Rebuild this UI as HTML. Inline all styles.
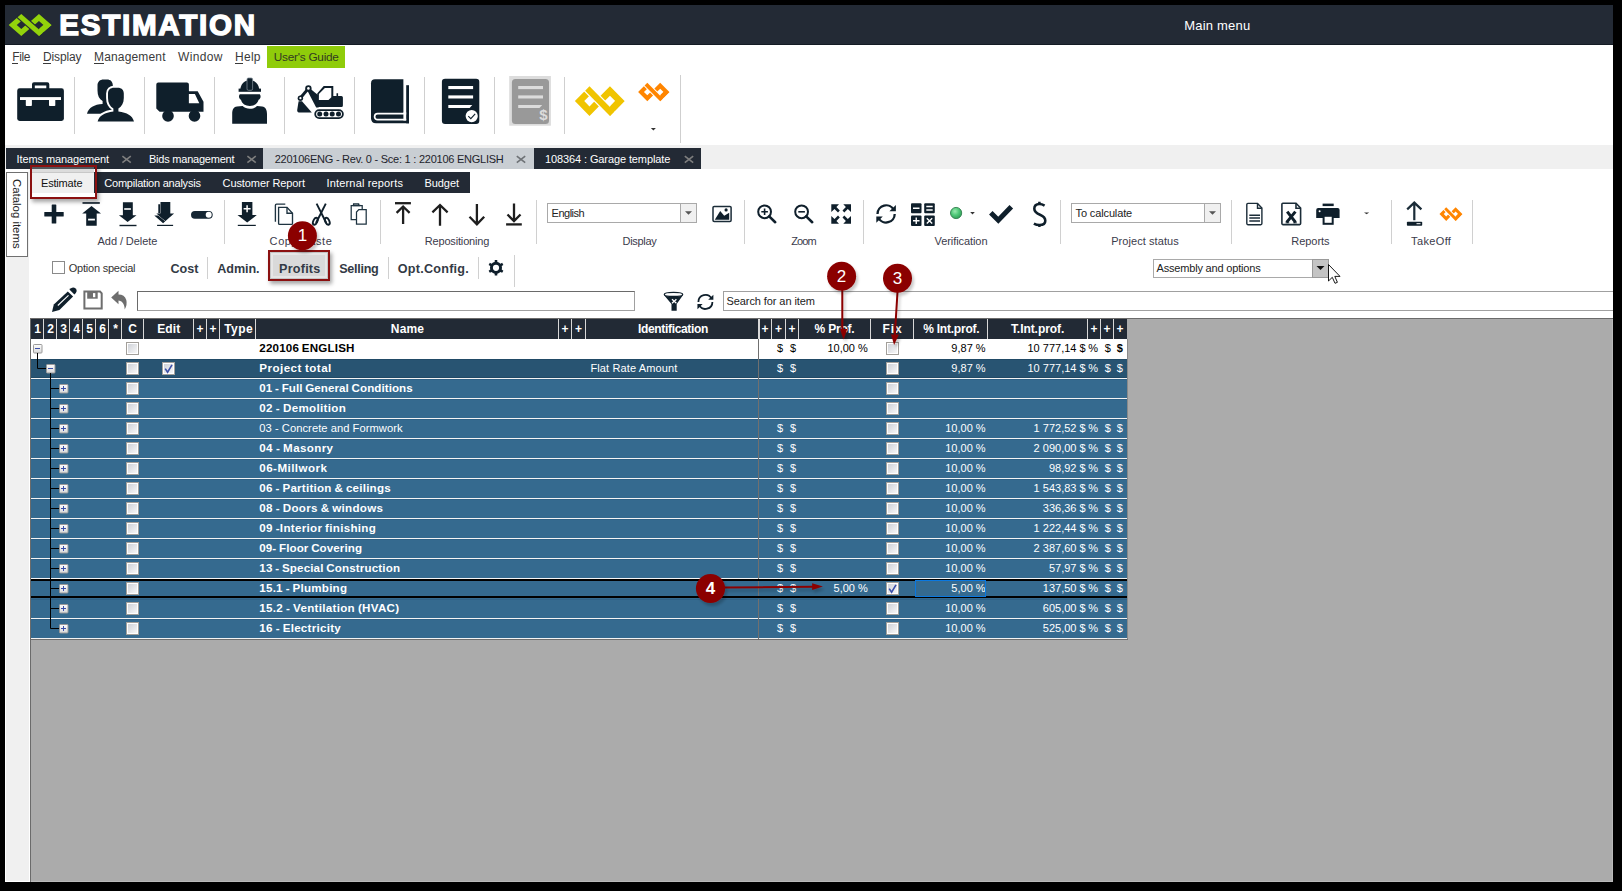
<!DOCTYPE html>
<html><head><meta charset="utf-8">
<style>
*{margin:0;padding:0;box-sizing:border-box}
html,body{width:1622px;height:891px;overflow:hidden;background:#000}
body{font-family:"Liberation Sans",sans-serif;position:relative}
.a{position:absolute}
.t{position:absolute;white-space:nowrap}
svg{overflow:visible}
</style></head><body>
<div class="a" style="left:5px;top:5px;width:1608px;height:877px;background:#fff;"></div>
<div class="a" style="left:5px;top:5px;width:1608px;height:39px;background:#232a35;"></div>
<div class="a" style="left:5px;top:44px;width:1608px;height:1px;background:#141b24;"></div>
<svg class="a" style="left:0px;top:0px" width="1" height="1" viewBox="0 0 1 1"><g transform="translate(21.3,25.0) scale(1,1) translate(-21.3,-25)"><path fill="#93d30b" fill-rule="evenodd" d="M8.70 25.00L21.30 13.95L33.90 25.00L21.30 36.05ZM16.75 25.00L21.30 28.95L25.85 25.00L21.30 21.05ZM26.35 25.00L38.95 13.95L51.55 25.00L38.95 36.05ZM34.40 25.00L38.95 28.95L43.50 25.00L38.95 21.05Z"/><path fill="#93d30b" stroke="#232a35" stroke-width="2.2" paint-order="stroke" d="M21.3 13.95L42.73 32.73L38.95 36.05L17.525 17.26Z"/><path fill="#93d30b" d="M38.95 28.95L43.5 25L51.55 25L38.95 36.05Z"/></g></svg>
<div class="t" style="left:59.2px;top:10.04px;font-size:29.6px;line-height:29.6px;font-weight:700;color:#fff;-webkit-text-stroke:1.4px #fff;letter-spacing:1.745px">ESTIMATION</div>
<div class="t" style="left:1184.3px;top:18.95px;font-size:13px;line-height:13px;font-weight:400;color:#fff;letter-spacing:0.198px">Main menu</div>
<div class="t" style="left:12.2px;top:51.40px;font-size:12px;line-height:12px;font-weight:400;color:#3a3a3a;letter-spacing:-0.348px">File</div>
<div class="t" style="left:43px;top:51.40px;font-size:12px;line-height:12px;font-weight:400;color:#3a3a3a;letter-spacing:-0.143px">Display</div>
<div class="t" style="left:94px;top:51.40px;font-size:12px;line-height:12px;font-weight:400;color:#3a3a3a;letter-spacing:0.161px">Management</div>
<div class="t" style="left:178px;top:51.40px;font-size:12px;line-height:12px;font-weight:400;color:#3a3a3a;letter-spacing:0.362px">Window</div>
<div class="t" style="left:235px;top:51.40px;font-size:12px;line-height:12px;font-weight:400;color:#3a3a3a;letter-spacing:0.271px">Help</div>
<div class="a" style="left:12px;top:63px;width:6px;height:1px;background:#3a3a3a;"></div>
<div class="a" style="left:43px;top:63px;width:8px;height:1px;background:#3a3a3a;"></div>
<div class="a" style="left:94px;top:63px;width:10px;height:1px;background:#3a3a3a;"></div>
<div class="a" style="left:235px;top:63px;width:8px;height:1px;background:#3a3a3a;"></div>
<div class="a" style="left:267px;top:46px;width:78px;height:22px;background:#8fcc0a;"></div>
<div class="t" style="left:273.8px;top:51.77px;font-size:11.8px;line-height:11.8px;font-weight:400;color:#333a22;letter-spacing:-0.248px">User's Guide</div>
<div class="a" style="left:74px;top:77px;width:1px;height:57px;background:#cfcfcf;"></div>
<div class="a" style="left:144px;top:77px;width:1px;height:57px;background:#cfcfcf;"></div>
<div class="a" style="left:214px;top:77px;width:1px;height:57px;background:#cfcfcf;"></div>
<div class="a" style="left:284px;top:77px;width:1px;height:57px;background:#cfcfcf;"></div>
<div class="a" style="left:354px;top:77px;width:1px;height:57px;background:#cfcfcf;"></div>
<div class="a" style="left:424px;top:77px;width:1px;height:57px;background:#cfcfcf;"></div>
<div class="a" style="left:494px;top:77px;width:1px;height:57px;background:#cfcfcf;"></div>
<div class="a" style="left:564px;top:77px;width:1px;height:57px;background:#cfcfcf;"></div>
<div class="a" style="left:680px;top:75px;width:1px;height:68px;background:#cfcfcf;"></div>
<svg class="a" style="left:0px;top:0px" width="1" height="1" viewBox="0 0 1 1"><g fill="#0f1f2b">
<path d="M34 82.3H47.3Q49.3 82.3 49.3 84.3V89H46.3V85.5H34.8V89H32V84.3Q32 82.3 34 82.3Z"/>
<rect x="17.2" y="88.3" width="46.7" height="32.6" rx="2.4"/></g>
<g fill="#fff"><rect x="20" y="97.1" width="41" height="2.9"/>
<rect x="25.8" y="99" width="6.1" height="7.1" rx="0.8"/><rect x="49" y="99" width="6.3" height="7.1" rx="0.8"/></g><g fill="#0f1f2b">
<path d="M102.6 101C99.2 99 97.5 95.5 97.5 90.5L97.5 85.5C97.5 81.6 100 79.5 103.5 79.5L107 79.5C110.5 79.5 112.8 81.6 112.8 85.5L112.8 90.5C112.8 95.5 110.8 99 107.6 101L107.6 104C112 104.5 116 107 118 113.7L87 113.7C88.6 107.5 94.2 104.5 102.6 104Z"/>
<path stroke="#fff" stroke-width="3.8" paint-order="stroke" d="M113.4 108.4C110 106.5 108 103 108 98L108 93.5C108 89.8 110.5 87.7 114 87.7L117.8 87.7C121.3 87.7 123.8 89.8 123.8 93.5L123.8 98C123.8 103 121.8 106.5 118.4 108.4L118.4 111.5C127 112.5 132.5 115.5 134 121.6L97.6 121.6C99.2 115.5 104.8 112.5 113.4 111.5Z"/></g><g fill="#0f1f2b">
<path d="M158.3 82.4H186.9Q188.9 82.4 188.9 84.4V91.2H197.7L203.5 101.7V111.7H159.6L156.3 108.5V84.4Q156.3 82.4 158.3 82.4Z"/>
<circle cx="168" cy="115.9" r="5.8"/><circle cx="194.5" cy="115.9" r="5.8"/></g>
<path fill="#fff" d="M188.9 93.9H194.9L199.3 103.3H188.9Z"/><g fill="#0f1f2b">
<rect x="238.6" y="88.6" width="22.4" height="3.2"/>
<path d="M240.4 89C241 83.5 245 80.3 249.8 80.3C254.6 80.3 258.6 83.5 259.2 89Z"/>
<rect x="247" y="78" width="5.6" height="12.3" rx="1.4" stroke="#7d8a94" stroke-width="0.8"/>
<path d="M239.8 94.2H259.8C261 95.5 261 98.5 258.6 99.8C257.6 104 254 106 249.8 106C245.6 106 242 104 241 99.8C238.6 98.5 238.6 95.5 239.8 94.2Z"/>
<path d="M232.2 123.7V114C232.2 109 234 107 237 106.6L242.6 106.1C244.6 108.1 247 108.8 249.8 108.8C252.6 108.8 255 108.1 257 106.1L262.2 106.6C265.5 107 267 110 267 114V123.7Z"/></g><g fill="#0f1f2b">
<path d="M317.2 93.6L323.7 85.9H333.3V96H336.5V93.2H338.1V96H341.4Q342.9 96 342.9 97.5V105.4Q342.9 106.9 341.4 106.9H318Z"/>
<path d="M307.3 90.6L310.9 89.2L318.6 95.5L318.6 107.4L316.2 107.4Z"/><path d="M308.4 88.4L300.4 98" fill="none" stroke="#0f1f2b" stroke-width="3" stroke-linejoin="round"/>
<circle cx="308.4" cy="88.4" r="3.2"/><circle cx="300.4" cy="98.2" r="2.7"/>
<path d="M298.6 101.2H302L311.8 112.6H300Q297 112.6 297.2 110Z"/>
<rect x="315.2" y="110.1" width="27.7" height="8" rx="4" fill="none" stroke="#0f1f2b" stroke-width="1.8"/>
<circle cx="319.7" cy="114.1" r="2.5"/><circle cx="326" cy="114.1" r="2.5"/><circle cx="332.2" cy="114.1" r="2.5"/><circle cx="338.5" cy="114.1" r="2.5"/></g>
<g fill="#fff"><path d="M318.9 94L324.9 88H331.3V97.2L328.5 100H318.9Z"/>
<circle cx="308.4" cy="88.4" r="1.3"/><circle cx="300.4" cy="98.2" r="1.1"/></g><g fill="#0f1f2b">
<path d="M375 79.2H403.4V113H371V83.2Q371 79.2 375 79.2Z"/>
<rect x="406.2" y="85.2" width="2.8" height="38.1"/>
<path d="M371 112.5H409V123.3H376Q371 123.3 371 118.3Z"/></g>
<path d="M406.2 113.7H377.6A3 3 0 0 0 377.6 119.7H406.2" stroke="#fff" stroke-width="1.7" fill="none"/><rect x="403.4" y="112" width="2.8" height="8.5" fill="#fff"/><rect x="441.9" y="78.8" width="37.4" height="45.1" rx="3.2" fill="#0f1f2b"/>
<g fill="#fff"><rect x="448.3" y="86" width="24.8" height="3.1"/><rect x="448.3" y="95.4" width="24.8" height="3.1"/>
<path d="M448.3 104.9H472.3L469.6 107.9H448.3Z"/><circle cx="471.7" cy="116.1" r="6.1"/></g>
<path d="M468.3 116.2L470.8 118.6L475.2 113.8" stroke="#0f1f2b" stroke-width="1.1" fill="none"/><rect x="509.2" y="76" width="41.7" height="49.7" fill="#dcdcdc"/>
<rect x="511.9" y="79" width="37.1" height="44.9" rx="3.5" fill="#999"/>
<g fill="#dcdcdc"><rect x="518.2" y="86" width="24.8" height="3.1"/><rect x="518.2" y="95.4" width="24.8" height="3.1"/>
<path d="M518.2 104.9H542.2L539.5 107.9H518.2Z"/></g><g transform="translate(589.5,101.1) scale(1.159,1.353) translate(-21.3,-25)"><path fill="#f0c400" fill-rule="evenodd" d="M8.70 25.00L21.30 13.95L33.90 25.00L21.30 36.05ZM16.75 25.00L21.30 28.95L25.85 25.00L21.30 21.05ZM26.35 25.00L38.95 13.95L51.55 25.00L38.95 36.05ZM34.40 25.00L38.95 28.95L43.50 25.00L38.95 21.05Z"/><path fill="#f0c400" stroke="#fff" stroke-width="2.0" paint-order="stroke" d="M21.3 13.95L42.73 32.73L38.95 36.05L17.525 17.26Z"/><path fill="#f0c400" d="M38.95 28.95L43.5 25L51.55 25L38.95 36.05Z"/></g><g transform="translate(647.3,92.0) scale(0.73,0.846) translate(-21.3,-25)"><path fill="#ff8500" fill-rule="evenodd" d="M8.70 25.00L21.30 13.95L33.90 25.00L21.30 36.05ZM16.75 25.00L21.30 28.95L25.85 25.00L21.30 21.05ZM26.35 25.00L38.95 13.95L51.55 25.00L38.95 36.05ZM34.40 25.00L38.95 28.95L43.50 25.00L38.95 21.05Z"/><path fill="#ff8500" stroke="#fff" stroke-width="2.4" paint-order="stroke" d="M21.3 13.95L42.73 32.73L38.95 36.05L17.525 17.26Z"/><path fill="#ff8500" d="M38.95 28.95L43.5 25L51.55 25L38.95 36.05Z"/></g><path d="M650.9 127.9H655.9L653.4 130.6Z" fill="#333"/></svg>
<div class="t" style="left:539.2px;top:107.45px;font-size:15px;line-height:15px;font-weight:700;color:#dcdcdc;">$</div>
<div class="a" style="left:5px;top:145px;width:1608px;height:24px;background:#f0f0f0;"></div>
<div class="a" style="left:6px;top:148px;width:695px;height:21px;background:#232a35;"></div>
<div class="a" style="left:263px;top:148px;width:271px;height:21px;background:#c9ced3;"></div>
<div class="t" style="left:16.6px;top:153.65px;font-size:11px;line-height:11px;font-weight:400;color:#fff;letter-spacing:-0.110px">Items management</div>
<div class="t" style="left:149px;top:153.65px;font-size:11px;line-height:11px;font-weight:400;color:#fff;letter-spacing:-0.227px">Bids management</div>
<div class="t" style="left:274.7px;top:153.65px;font-size:11px;line-height:11px;font-weight:400;color:#1d232b;letter-spacing:-0.241px">220106ENG - Rev. 0 - Sce: 1 : 220106 ENGLISH</div>
<div class="t" style="left:545px;top:153.65px;font-size:11px;line-height:11px;font-weight:400;color:#fff;letter-spacing:-0.109px">108364 : Garage template</div>
<svg class="a" style="left:0px;top:0px" width="1" height="1" viewBox="0 0 1 1"><path d="M122.4 156.1L130.8 162.7M130.8 156.1L122.4 162.7" stroke="#7e7e7e" stroke-width="1.6" fill="none"/><path d="M247.4 156.1L255.8 162.7M255.8 156.1L247.4 162.7" stroke="#7e7e7e" stroke-width="1.6" fill="none"/><path d="M516.8 156.1L525.1999999999999 162.7M525.1999999999999 156.1L516.8 162.7" stroke="#6e7276" stroke-width="1.6" fill="none"/><path d="M684.8 156.1L693.1999999999999 162.7M693.1999999999999 156.1L684.8 162.7" stroke="#7e7e7e" stroke-width="1.6" fill="none"/></svg>
<div class="a" style="left:5px;top:172px;width:1px;height:710px;background:#fff;"></div>
<div class="a" style="left:6px;top:172px;width:23px;height:709px;background:#f0f0f0;"></div>
<div class="a" style="left:94px;top:172px;width:376px;height:21px;background:#232a35;"></div>
<div class="a" style="left:31px;top:172px;width:63px;height:21px;background:#f0f0f0;"></div>
<div class="t" style="left:41px;top:177.65px;font-size:11px;line-height:11px;font-weight:400;color:#111;letter-spacing:-0.185px">Estimate</div>
<div class="t" style="left:104.3px;top:177.65px;font-size:11px;line-height:11px;font-weight:400;color:#fff;letter-spacing:-0.226px">Compilation analysis</div>
<div class="t" style="left:222.6px;top:177.65px;font-size:11px;line-height:11px;font-weight:400;color:#fff;letter-spacing:-0.098px">Customer Report</div>
<div class="t" style="left:326.6px;top:177.65px;font-size:11px;line-height:11px;font-weight:400;color:#fff;letter-spacing:0.154px">Internal reports</div>
<div class="t" style="left:424.5px;top:177.65px;font-size:11px;line-height:11px;font-weight:400;color:#fff;letter-spacing:-0.075px">Budget</div>
<div class="a" style="left:6px;top:172px;width:22px;height:85px;background:#fff;border:1px solid #707070"></div>
<div class="t" style="left:10px;top:178.5px;font-size:11.4px;line-height:13px;color:#222;writing-mode:vertical-rl">Catalog items</div>
<div class="a" style="left:31px;top:167px;width:63px;height:2px;background:#50565c;"></div>
<div class="a" style="left:31px;top:169px;width:63px;height:3px;background:#dcdcdc;"></div>
<div class="a" style="left:31px;top:172px;width:63px;height:1px;background:#c8c8c8;"></div>
<div class="a" style="left:29.5px;top:165px;width:67.5px;height:33.7px;border:2.6px solid #8b1010;box-shadow:2px 3px 4px rgba(0,0,0,.35)"></div>
<div class="a" style="left:224px;top:200px;width:1px;height:44px;background:#d0d0d0;"></div>
<div class="a" style="left:380px;top:200px;width:1px;height:44px;background:#d0d0d0;"></div>
<div class="a" style="left:536px;top:200px;width:1px;height:44px;background:#d0d0d0;"></div>
<div class="a" style="left:744px;top:200px;width:1px;height:44px;background:#d0d0d0;"></div>
<div class="a" style="left:863px;top:200px;width:1px;height:44px;background:#d0d0d0;"></div>
<div class="a" style="left:1060px;top:200px;width:1px;height:44px;background:#d0d0d0;"></div>
<div class="a" style="left:1231px;top:200px;width:1px;height:44px;background:#d0d0d0;"></div>
<div class="a" style="left:1391px;top:200px;width:1px;height:44px;background:#d0d0d0;"></div>
<div class="a" style="left:1472px;top:200px;width:1px;height:44px;background:#d0d0d0;"></div>
<div class="t" style="left:67.4px;width:120px;text-align:center;top:235.65px;font-size:11px;line-height:11px;font-weight:400;color:#3b3b4b;letter-spacing:-0.077px">Add / Delete</div>
<div class="t" style="left:241.0px;width:120px;text-align:center;top:235.65px;font-size:11px;line-height:11px;font-weight:400;color:#3b3b4b;letter-spacing:0.592px">Copy/Paste</div>
<div class="t" style="left:397.0px;width:120px;text-align:center;top:235.65px;font-size:11px;line-height:11px;font-weight:400;color:#3b3b4b;letter-spacing:-0.163px">Repositioning</div>
<div class="t" style="left:579.5px;width:120px;text-align:center;top:235.65px;font-size:11px;line-height:11px;font-weight:400;color:#3b3b4b;letter-spacing:-0.313px">Display</div>
<div class="t" style="left:743.5px;width:120px;text-align:center;top:235.65px;font-size:11px;line-height:11px;font-weight:400;color:#3b3b4b;letter-spacing:-0.875px">Zoom</div>
<div class="t" style="left:901.0px;width:120px;text-align:center;top:235.65px;font-size:11px;line-height:11px;font-weight:400;color:#3b3b4b;letter-spacing:-0.074px">Verification</div>
<div class="t" style="left:1085.0px;width:120px;text-align:center;top:235.65px;font-size:11px;line-height:11px;font-weight:400;color:#3b3b4b;letter-spacing:0.074px">Project status</div>
<div class="t" style="left:1250.4px;width:120px;text-align:center;top:235.65px;font-size:11px;line-height:11px;font-weight:400;color:#3b3b4b;letter-spacing:-0.039px">Reports</div>
<div class="t" style="left:1371.2px;width:120px;text-align:center;top:235.65px;font-size:11px;line-height:11px;font-weight:400;color:#3b3b4b;letter-spacing:0.347px">TakeOff</div>
<svg class="a" style="left:0px;top:0px" width="1" height="1" viewBox="0 0 1 1"><g fill="#0f1f2b"><rect x="44.3" y="211.9" width="19.4" height="4.6" rx="0.6"/><rect x="51.7" y="204.5" width="4.6" height="19.1" rx="0.6"/></g><rect x="82.5" y="202" width="17.3" height="1.9" fill="#2a3640"/><path fill="#0f1f2b" d="M82.2 213.4L91.5 206L101 213.4H96.7V225.7H86.2V213.4Z"/><rect x="88.1" y="218.7" width="6.8" height="1.8" fill="#fff"/><path fill="#0f1f2b" d="M122.9 202.2H132.8V215.3H136.5L127.6 221.9L118.9 215.3H122.9Z"/><rect x="119.5" y="224.8" width="17" height="1.4" fill="#0f1f2b"/><rect x="124.2" y="208.2" width="6.7" height="1.6" fill="#fff"/><g fill="#0f1f2b" stroke="#fff" stroke-width="0.8" paint-order="stroke"><path d="M158.3 204.2H168V215.6H171.8L163.1 223.2L154.3 215.6H158.3Z"/><path d="M160.5 202H170.3V213.6H174.1L165.3 221.1L156.4 213.6H160.5Z"/></g><rect x="157.1" y="224.8" width="16" height="1.2" fill="#0f1f2b"/><rect x="191" y="210.9" width="21.7" height="7.8" rx="3.9" fill="#152633"/><circle cx="208.7" cy="214.8" r="3" fill="#fff"/><path fill="#0f1f2b" d="M241.9 202H252.4V215H256.8L247.2 222.6L237.5 215H241.9Z"/><rect x="237.8" y="224.8" width="18" height="1.2" fill="#0f1f2b"/><path d="M247.1 205.2V212.2M243.6 208.7H250.6" stroke="#fff" stroke-width="1.5"/><g fill="none" stroke="#1e3340" stroke-width="1.35"><path d="M275.4 221.8V205.2Q275.4 204.1 276.5 204.1H285.3"/><path d="M278.6 207.4H287L292.5 213.2V223.4Q292.5 224.4 291.5 224.4H279.6Q278.6 224.4 278.6 223.4Z"/><path d="M287 207.4V213.2H292.5"/></g><g fill="none" stroke="#0f1f2b" stroke-width="1.9"><path d="M316.6 203.6L326.3 223"/><path d="M325.8 203.6L316 223"/><ellipse cx="315.3" cy="221.2" rx="2" ry="3.7" transform="rotate(25 315.3 221.2)"/><ellipse cx="327.3" cy="221.2" rx="2" ry="3.7" transform="rotate(-25 327.3 221.2)"/></g><g fill="none" stroke="#1e3340" stroke-width="1.25"><path d="M356 219.6H351.2V205.6H362.2V209.2"/><path d="M353.6 205.2V203.8H358.6V205.2"/><path d="M358.8 209.6H366.2V224H356.5V212Z"/></g><rect x="352.8" y="204.6" width="7.4" height="1.6" fill="#1e3340"/><g fill="none" stroke="#1e1e1e" stroke-width="2.3"><path d="M395 203.2H410.9"/><path d="M403.1 206.2V223.9M396.6 212.8L403.1 206.5L409.6 212.8"/><path d="M440 205.5V225.7M432.4 212.3L440 205L447.6 212.3"/><path d="M476.9 204V224M469.5 216.8L476.9 224.3L484.2 216.8"/><path d="M514 203.4V221M507.5 214.5L514 221L520.5 214.5"/><path d="M506.1 224.4H521.8"/></g><rect x="713" y="206.4" width="18.1" height="15.1" rx="1.2" fill="none" stroke="#1b2c38" stroke-width="1.5"/><path d="M714.8 219.7L720.2 210.9L724.2 215.8L729.2 212.8V219.7Z" fill="#0f1f2b"/><circle cx="726.1" cy="209.9" r="1.6" fill="#0f1f2b"/><circle cx="764.6" cy="211.8" r="6.4" fill="none" stroke="#0f1f2b" stroke-width="2"/><path d="M769.2 216.4L775.2 222.2" stroke="#0f1f2b" stroke-width="2.6" stroke-linecap="round"/><path d="M761.3000000000001 211.8H767.9M764.6 208.5V215.1" stroke="#0f1f2b" stroke-width="1.6"/><circle cx="801.6" cy="211.8" r="6.4" fill="none" stroke="#0f1f2b" stroke-width="2"/><path d="M806.2 216.4L812.2 222.2" stroke="#0f1f2b" stroke-width="2.6" stroke-linecap="round"/><path d="M798.3000000000001 211.8H804.9" stroke="#0f1f2b" stroke-width="1.6"/><g fill="#0f1f2b"><path d="M831.3 204.2L839 204.2L836.4 207L839.8 210.6L838 212.5L834.5 209L831.3 211.9Z"/><path d="M851 204.2L843.3 204.2L845.9 207L842.5 210.6L844.3 212.5L847.8 209L851 211.9Z"/><path d="M831.3 223.8L839 223.8L836.4 221L839.8 217.4L838 215.5L834.5 219L831.3 216.1Z"/><path d="M851 223.8L843.3 223.8L845.9 221L842.5 217.4L844.3 215.5L847.8 219L851 216.1Z"/></g><path d="M877.50 213.90A8.6 8.6 0 0 1 893.69 209.86M894.70 213.90A8.6 8.6 0 0 1 878.51 217.94" fill="none" stroke="#0f1f2b" stroke-width="2.3"/><path fill="#0f1f2b" d="M895.90 211.20L889.40 211.20L895.90 205.00Z"/><path fill="#0f1f2b" d="M876.30 216.60L882.80 216.60L876.30 222.80Z"/><g fill="#0f1f2b"><rect x="911" y="203.3" width="10.5" height="9.9" rx="1"/><rect x="924.2" y="203.3" width="10.6" height="9.9" rx="1"/><rect x="911" y="215.6" width="10.5" height="10.3" rx="1"/><rect x="924.2" y="215.6" width="10.6" height="10.3" rx="1"/></g><g stroke="#fff" stroke-width="1.4"><path d="M913 208.2H919.5M926.3 206.5H932.7M926.3 210H932.7M913 220.7H919.5M916.25 217.5V224M926.8 218.2L932.2 223.4M932.2 218.2L926.8 223.4"/></g><defs><radialGradient id="gd" cx="0.4" cy="0.35" r="0.7"><stop offset="0" stop-color="#9be8b0"/><stop offset="0.5" stop-color="#4fc878"/><stop offset="1" stop-color="#2e9a55"/></radialGradient></defs><circle cx="956.1" cy="213" r="5.6" fill="url(#gd)" stroke="#2f7f4c" stroke-width="0.9"/><path d="M970.2 212.1H974.8L972.5 214.4Z" fill="#333"/><path d="M990.8 212.8L998.3 220.2L1011.3 206.8" fill="none" stroke="#0f1f2b" stroke-width="5"/><path d="M1044.6 205.6C1042.8 204.5 1041 204 1039.4 204C1036.2 204 1034.3 206 1034.3 208.8C1034.3 212.2 1037 213.5 1040 214.7C1043.2 216 1045.3 217.6 1045.3 220.7C1045.3 223.5 1043 225 1039.6 225C1037.3 225 1035.3 224.4 1033.9 223.6M1039.4 201.8V204.2M1039.4 224.8V227" fill="none" stroke="#0f1f2b" stroke-width="2.55"/><g fill="none" stroke="#1b2c38" stroke-width="1.4"><path d="M1246.8 204.5Q1246.8 203.4 1247.9 203.4H1257.5L1261.9 208V223.6Q1261.9 224.7 1260.8 224.7H1247.9Q1246.8 224.7 1246.8 223.6Z"/><path d="M1257.5 203.6V208.2H1261.8"/></g><path d="M1249.3 215.2H1260M1249.3 218.1H1260M1249.3 221H1260" stroke="#1b2c38" stroke-width="1.5"/><g fill="none" stroke="#1b2c38" stroke-width="1.6"><path d="M1281.9 204.2Q1281.9 203.2 1282.9 203.2H1296L1300.6 208V223.6Q1300.6 224.6 1299.6 224.6H1282.9Q1281.9 224.6 1281.9 223.6Z"/><path d="M1296 203.4V208.2H1300.5"/></g><path d="M1287.2 211.6L1295.6 222.4M1295.4 211.6L1286.6 222.4" stroke="#0f1f2b" stroke-width="3" fill="none"/><path d="M1285.6 222.8H1289.2M1293.3 222.8H1296.8" stroke="#0f1f2b" stroke-width="1"/><g fill="#0f1f2b"><rect x="1322.6" y="203.6" width="11.1" height="2.5"/><path d="M1318.2 208H1337.6Q1339.6 208 1339.6 210V218H1316.2V210Q1316.2 208 1318.2 208Z"/></g><rect x="1323.6" y="215.8" width="9.1" height="8" fill="#fff" stroke="#0f1f2b" stroke-width="2"/><circle cx="1319.6" cy="211.3" r="1" fill="#fff"/><path d="M1364 212.4H1369.2L1366.6 214.3Z" fill="#333"/><g fill="none" stroke="#1b2c38" stroke-width="2.2"><path d="M1414.3 203.5V220.2M1407.2 209.4L1414.3 202.6L1421.4 209.4"/></g><rect x="1406.9" y="221.7" width="15.3" height="4.1" rx="0.8" fill="#0f1f2b"/><rect x="1416.5" y="223.2" width="4" height="1" fill="#fff"/><g transform="translate(1446.2,214.05) scale(0.534,0.62) translate(-21.3,-25)"><path fill="#ff8500" fill-rule="evenodd" d="M8.70 25.00L21.30 13.95L33.90 25.00L21.30 36.05ZM16.75 25.00L21.30 28.95L25.85 25.00L21.30 21.05ZM26.35 25.00L38.95 13.95L51.55 25.00L38.95 36.05ZM34.40 25.00L38.95 28.95L43.50 25.00L38.95 21.05Z"/><path fill="#ff8500" stroke="#fff" stroke-width="3.4" paint-order="stroke" d="M21.3 13.95L42.73 32.73L38.95 36.05L17.525 17.26Z"/><path fill="#ff8500" d="M38.95 28.95L43.5 25L51.55 25L38.95 36.05Z"/></g></svg>
<div class="a" style="left:547px;top:203px;width:150px;height:20px;background:#fff;border:1px solid #a9a9a9"></div>
<div class="a" style="left:680px;top:203px;width:17px;height:20px;background:#f0f0f0;border:1px solid #a9a9a9"></div>
<svg class="a" style="left:0;top:0" width="1" height="1"><path d="M685.0 211.2H692.0L688.5 214.8Z" fill="#555"/></svg>
<div class="t" style="left:551.6px;top:207.65px;font-size:11px;line-height:11px;font-weight:400;color:#222;letter-spacing:-0.513px">English</div>
<div class="a" style="left:1071px;top:203px;width:150px;height:20px;background:#fff;border:1px solid #a9a9a9"></div>
<div class="a" style="left:1204px;top:203px;width:17px;height:20px;background:#f0f0f0;border:1px solid #a9a9a9"></div>
<svg class="a" style="left:0;top:0" width="1" height="1"><path d="M1209.0 211.2H1216.0L1212.5 214.8Z" fill="#555"/></svg>
<div class="t" style="left:1075.6px;top:207.65px;font-size:11px;line-height:11px;font-weight:400;color:#222;letter-spacing:-0.136px">To calculate</div>
<div class="a" style="left:52px;top:261px;width:13px;height:13px;background:#fff;border:1px solid #8a8a8a"></div>
<div class="t" style="left:68.8px;top:263.15px;font-size:11px;line-height:11px;font-weight:400;color:#333;letter-spacing:-0.232px">Option special</div>
<div class="t" style="left:170.5px;top:263.09px;font-size:12.6px;line-height:12.6px;font-weight:700;color:#333a45;letter-spacing:-0.033px">Cost</div>
<div class="a" style="left:207px;top:257px;width:1px;height:22px;background:#d0d0d0;"></div>
<div class="t" style="left:217.3px;top:263.09px;font-size:12.6px;line-height:12.6px;font-weight:700;color:#333a45;letter-spacing:-0.078px">Admin.</div>
<div class="a" style="left:270px;top:252px;width:58px;height:27px;background:#d9d9d9;border:1px solid #c4c4c4;box-shadow:inset 0 0 0 2px #e6e6e6"></div>
<div class="t" style="left:279px;top:263.09px;font-size:12.6px;line-height:12.6px;font-weight:700;color:#333a45;letter-spacing:0.235px">Profits</div>
<div class="t" style="left:339.2px;top:263.09px;font-size:12.6px;line-height:12.6px;font-weight:700;color:#333a45;letter-spacing:-0.283px">Selling</div>
<div class="a" style="left:388px;top:257px;width:1px;height:22px;background:#d0d0d0;"></div>
<div class="t" style="left:397.8px;top:263.09px;font-size:12.6px;line-height:12.6px;font-weight:700;color:#333a45;letter-spacing:0.245px">Opt.Config.</div>
<div class="a" style="left:478px;top:257px;width:1px;height:22px;background:#d0d0d0;"></div>
<div class="a" style="left:514px;top:255px;width:1px;height:32px;background:#d0d0d0;"></div>
<div class="a" style="left:1153px;top:258.5px;width:176px;height:19px;background:#fff;border:1px solid #a9a9a9"></div>
<div class="a" style="left:1312px;top:258.5px;width:17px;height:19px;background:#c4c4c4;border:1px solid #9a9a9a"></div>
<div class="t" style="left:1156.5px;top:262.65px;font-size:11px;line-height:11px;font-weight:400;color:#222;letter-spacing:-0.180px">Assembly and options</div>
<svg class="a" style="left:0px;top:0px" width="1" height="1" viewBox="0 0 1 1"><path fill-rule="evenodd" fill="#0f1f2b" d="M499.00 262.60L497.35 261.95L497.24 260.00L494.76 260.00L494.65 261.95L493.00 262.60L493.00 262.60L491.61 263.71L489.86 262.83L488.62 264.97L490.26 266.05L490.00 267.80L490.00 267.80L490.26 269.55L488.62 270.63L489.86 272.77L491.61 271.89L493.00 273.00L493.00 273.00L494.65 273.65L494.76 275.60L497.24 275.60L497.35 273.65L499.00 273.00L499.00 273.00L500.39 271.89L502.14 272.77L503.38 270.63L501.74 269.55L502.00 267.80L502.00 267.80L501.74 266.05L503.38 264.97L502.14 262.83L500.39 263.71L499.00 262.60ZM499.1 267.8A3.1 3.1 0 1 0 492.9 267.8A3.1 3.1 0 1 0 499.1 267.8Z"/><path fill="#0f1f2b" d="M52 311.9L53.8 304.6L67.8 291.4L73.1 296.6L59.4 310.1Z"/><path fill="#0f1f2b" d="M69.4 289.6L71 288.2Q73.5 286.5 75.6 288.6Q77.6 290.7 75.8 293L74.4 294.6Z"/><path d="M57.8 305.5L68.5 295.3" stroke="#fff" stroke-width="1.1"/><path fill="none" stroke="#6e6e6e" stroke-width="2" d="M84.4 291.5H100L101.7 293.3V308.5H84.4Z"/><rect x="87.2" y="292" width="10.5" height="6.7" fill="#6e6e6e"/><rect x="93" y="293.1" width="2.3" height="4.1" fill="#fff"/><path fill="#6e6e6e" d="M111.2 297.5L118.5 290.8V294.6Q124.5 294.6 126.3 300Q127.5 304.5 124.7 309.5Q124.6 304.5 121.8 301.8Q120.5 300.5 118.5 300.4V304.3Z"/><ellipse cx="673.5" cy="294.4" rx="9.2" ry="2.1" fill="none" stroke="#0f1f2b" stroke-width="1.3"/><path fill="#0f1f2b" d="M664.1 295.2Q673.5 299 682.9 295.2L676.7 304V310.7H671.5V304Z"/><path d="M672 299.3L676.4 303.3M676.4 299.3L672 303.3" stroke="#fff" stroke-width="1.3"/><path d="M698.40 301.90A7.0 7.0 0 0 1 711.58 298.61M712.40 301.90A7.0 7.0 0 0 1 699.22 305.19" fill="none" stroke="#0f1f2b" stroke-width="1.8"/><path fill="#0f1f2b" d="M713.36 299.74L708.16 299.74L713.36 294.66Z"/><path fill="#0f1f2b" d="M697.44 304.06L702.64 304.06L697.44 309.14Z"/><path d="M1316.5 266H1324.5L1320.5 270Z" fill="#111"/><path d="M1328.5 264.5V281L1332.3 277.3L1335 283.3L1337.4 282.3L1334.8 276.4H1340Z" fill="#fff" stroke="#000" stroke-width="0.9" stroke-linejoin="round"/></svg>
<div class="a" style="left:137px;top:291px;width:498px;height:20px;background:#fff;border:1px solid #a0a0a0;border-top-color:#6a6a6a;border-left-color:#6a6a6a"></div>
<div class="a" style="left:723px;top:291px;width:895px;height:20px;background:#fff;border:1px solid #a0a0a0"></div>
<div class="a" style="left:1613px;top:286px;width:9px;height:30px;background:#000;"></div>
<div class="t" style="left:726.5px;top:295.65px;font-size:11px;line-height:11px;font-weight:400;color:#222;letter-spacing:-0.087px">Search for an item</div>
<div class="a" style="left:30px;top:318px;width:1583px;height:564px;background:#ababab;"></div>
<div class="a" style="left:30px;top:318px;width:1583px;height:1px;background:#6b6b6b;"></div>
<div class="a" style="left:30px;top:318px;width:1px;height:564px;background:#6b6b6b;"></div>
<div class="a" style="left:5px;top:881px;width:25px;height:1px;background:#fff;"></div>
<div class="a" style="left:31px;top:881px;width:1582px;height:1px;background:#bababa;"></div>
<div class="a" style="left:1612px;top:319px;width:1px;height:563px;background:#bababa;"></div>
<div class="a" style="left:1127px;top:339px;width:1px;height:300px;background:#8a8a8a;"></div>
<div class="a" style="left:31px;top:319px;width:1096px;height:20px;background:#222a35;"></div>
<div class="a" style="left:43px;top:319px;width:1.2px;height:20px;background:#d8d8d8;"></div>
<div class="a" style="left:56px;top:319px;width:1.2px;height:20px;background:#d8d8d8;"></div>
<div class="a" style="left:69px;top:319px;width:1.2px;height:20px;background:#d8d8d8;"></div>
<div class="a" style="left:82px;top:319px;width:1.2px;height:20px;background:#d8d8d8;"></div>
<div class="a" style="left:95px;top:319px;width:1.2px;height:20px;background:#d8d8d8;"></div>
<div class="a" style="left:108px;top:319px;width:1.2px;height:20px;background:#d8d8d8;"></div>
<div class="a" style="left:121px;top:319px;width:1.2px;height:20px;background:#d8d8d8;"></div>
<div class="a" style="left:143px;top:319px;width:1.2px;height:20px;background:#d8d8d8;"></div>
<div class="a" style="left:193px;top:319px;width:1.2px;height:20px;background:#d8d8d8;"></div>
<div class="a" style="left:206px;top:319px;width:1.2px;height:20px;background:#d8d8d8;"></div>
<div class="a" style="left:219px;top:319px;width:1.2px;height:20px;background:#d8d8d8;"></div>
<div class="a" style="left:255px;top:319px;width:1.2px;height:20px;background:#d8d8d8;"></div>
<div class="a" style="left:558px;top:319px;width:1.2px;height:20px;background:#d8d8d8;"></div>
<div class="a" style="left:571px;top:319px;width:1.2px;height:20px;background:#d8d8d8;"></div>
<div class="a" style="left:585px;top:319px;width:1.2px;height:20px;background:#d8d8d8;"></div>
<div class="a" style="left:758px;top:319px;width:1.5px;height:20px;background:#d8d8d8;"></div>
<div class="a" style="left:771px;top:319px;width:1.2px;height:20px;background:#d8d8d8;"></div>
<div class="a" style="left:785px;top:319px;width:1.2px;height:20px;background:#d8d8d8;"></div>
<div class="a" style="left:798px;top:319px;width:1.2px;height:20px;background:#d8d8d8;"></div>
<div class="a" style="left:870px;top:319px;width:1.2px;height:20px;background:#d8d8d8;"></div>
<div class="a" style="left:913px;top:319px;width:1.2px;height:20px;background:#d8d8d8;"></div>
<div class="a" style="left:987px;top:319px;width:1.2px;height:20px;background:#d8d8d8;"></div>
<div class="a" style="left:1087px;top:319px;width:1.2px;height:20px;background:#d8d8d8;"></div>
<div class="a" style="left:1100px;top:319px;width:1.2px;height:20px;background:#d8d8d8;"></div>
<div class="a" style="left:1113px;top:319px;width:1.2px;height:20px;background:#d8d8d8;"></div>
<div class="t" style="left:-62.5px;width:200px;text-align:center;top:322.80px;font-size:12px;line-height:12px;font-weight:700;color:#fff;">1</div>
<div class="t" style="left:-49.5px;width:200px;text-align:center;top:322.80px;font-size:12px;line-height:12px;font-weight:700;color:#fff;">2</div>
<div class="t" style="left:-36.5px;width:200px;text-align:center;top:322.80px;font-size:12px;line-height:12px;font-weight:700;color:#fff;">3</div>
<div class="t" style="left:-23.5px;width:200px;text-align:center;top:322.80px;font-size:12px;line-height:12px;font-weight:700;color:#fff;">4</div>
<div class="t" style="left:-10.5px;width:200px;text-align:center;top:322.80px;font-size:12px;line-height:12px;font-weight:700;color:#fff;">5</div>
<div class="t" style="left:2.5px;width:200px;text-align:center;top:322.80px;font-size:12px;line-height:12px;font-weight:700;color:#fff;">6</div>
<div class="t" style="left:15.5px;width:200px;text-align:center;top:322.80px;font-size:12px;line-height:12px;font-weight:700;color:#fff;">*</div>
<div class="t" style="left:32.5px;width:200px;text-align:center;top:322.80px;font-size:12px;line-height:12px;font-weight:700;color:#fff;">C</div>
<div class="t" style="left:68.80000000000001px;width:200px;text-align:center;top:322.80px;font-size:12px;line-height:12px;font-weight:700;color:#fff;letter-spacing:0.109px">Edit</div>
<div class="t" style="left:100.0px;width:200px;text-align:center;top:322.80px;font-size:12px;line-height:12px;font-weight:700;color:#fff;">+</div>
<div class="t" style="left:113.0px;width:200px;text-align:center;top:322.80px;font-size:12px;line-height:12px;font-weight:700;color:#fff;">+</div>
<div class="t" style="left:138.7px;width:200px;text-align:center;top:322.80px;font-size:12px;line-height:12px;font-weight:700;color:#fff;letter-spacing:0.492px">Type</div>
<div class="t" style="left:307.5px;width:200px;text-align:center;top:322.80px;font-size:12px;line-height:12px;font-weight:700;color:#fff;letter-spacing:0.171px">Name</div>
<div class="t" style="left:465.0px;width:200px;text-align:center;top:322.80px;font-size:12px;line-height:12px;font-weight:700;color:#fff;">+</div>
<div class="t" style="left:478.5px;width:200px;text-align:center;top:322.80px;font-size:12px;line-height:12px;font-weight:700;color:#fff;">+</div>
<div class="t" style="left:573.0px;width:200px;text-align:center;top:322.80px;font-size:12px;line-height:12px;font-weight:700;color:#fff;letter-spacing:-0.321px">Identification</div>
<div class="t" style="left:665.0px;width:200px;text-align:center;top:322.80px;font-size:12px;line-height:12px;font-weight:700;color:#fff;">+</div>
<div class="t" style="left:678.5px;width:200px;text-align:center;top:322.80px;font-size:12px;line-height:12px;font-weight:700;color:#fff;">+</div>
<div class="t" style="left:692.0px;width:200px;text-align:center;top:322.80px;font-size:12px;line-height:12px;font-weight:700;color:#fff;">+</div>
<div class="t" style="left:734.5px;width:200px;text-align:center;top:322.80px;font-size:12px;line-height:12px;font-weight:700;color:#fff;letter-spacing:-0.224px">% Prof.</div>
<div class="t" style="left:792.5px;width:200px;text-align:center;top:322.80px;font-size:12px;line-height:12px;font-weight:700;color:#fff;letter-spacing:0.878px">Fix</div>
<div class="t" style="left:851.3px;width:200px;text-align:center;top:322.80px;font-size:12px;line-height:12px;font-weight:700;color:#fff;letter-spacing:-0.227px">% Int.prof.</div>
<div class="t" style="left:937.5999999999999px;width:200px;text-align:center;top:322.80px;font-size:12px;line-height:12px;font-weight:700;color:#fff;letter-spacing:-0.060px">T.Int.prof.</div>
<div class="t" style="left:994.0px;width:200px;text-align:center;top:322.80px;font-size:12px;line-height:12px;font-weight:700;color:#fff;">+</div>
<div class="t" style="left:1007.0px;width:200px;text-align:center;top:322.80px;font-size:12px;line-height:12px;font-weight:700;color:#fff;">+</div>
<div class="t" style="left:1020.0px;width:200px;text-align:center;top:322.80px;font-size:12px;line-height:12px;font-weight:700;color:#fff;">+</div>
<div class="a" style="left:31px;top:339px;width:1096px;height:20px;background:#fff;"></div>
<div class="t" style="left:259.3px;top:342.34px;font-size:11.6px;line-height:11.6px;font-weight:700;color:#000;word-spacing:-0.6px;letter-spacing:0.181px">220106 ENGLISH</div>
<div class="t" style="left:777px;top:342.85px;font-size:11px;line-height:11px;font-weight:400;color:#000;">$</div>
<div class="t" style="left:790px;top:342.85px;font-size:11px;line-height:11px;font-weight:400;color:#000;">$</div>
<div class="t" style="right:754.2px;text-align:right;top:342.85px;font-size:11px;line-height:11px;font-weight:400;color:#000;">10,00 %</div>
<div class="t" style="right:636.4px;text-align:right;top:342.85px;font-size:11px;line-height:11px;font-weight:400;color:#000;">9,87 %</div>
<div class="t" style="right:536.4000000000001px;text-align:right;top:342.85px;font-size:11px;line-height:11px;font-weight:400;color:#000;">10 777,14 $</div>
<div class="t" style="left:1088.3px;top:342.85px;font-size:11px;line-height:11px;font-weight:400;color:#000;">%</div>
<div class="t" style="left:1104.8px;top:342.85px;font-size:11px;line-height:11px;font-weight:400;color:#000;">$</div>
<div class="t" style="left:1116.8px;top:342.85px;font-size:11px;line-height:11px;font-weight:700;color:#000;">$</div>
<div class="a" style="left:31px;top:359px;width:1096px;height:19px;background:#285472;"></div>
<div class="a" style="left:31px;top:359px;width:1096px;height:1px;background:#214a66;"></div>
<div class="a" style="left:31px;top:377px;width:1096px;height:1px;background:#214a66;"></div>
<div class="a" style="left:31px;top:378px;width:1096px;height:1px;background:#f4f4f4;"></div>
<div class="t" style="left:259.3px;top:362.34px;font-size:11.6px;line-height:11.6px;font-weight:700;color:#fff;word-spacing:-0.6px;letter-spacing:0.466px">Project total</div>
<div class="t" style="left:590.4px;top:362.85px;font-size:11px;line-height:11px;font-weight:400;color:#fff;letter-spacing:0.127px">Flat Rate Amount</div>
<div class="t" style="left:777px;top:362.85px;font-size:11px;line-height:11px;font-weight:400;color:#fff;">$</div>
<div class="t" style="left:790px;top:362.85px;font-size:11px;line-height:11px;font-weight:400;color:#fff;">$</div>
<div class="t" style="right:636.4px;text-align:right;top:362.85px;font-size:11px;line-height:11px;font-weight:400;color:#fff;">9,87 %</div>
<div class="t" style="right:536.4000000000001px;text-align:right;top:362.85px;font-size:11px;line-height:11px;font-weight:400;color:#fff;">10 777,14 $</div>
<div class="t" style="left:1088.3px;top:362.85px;font-size:11px;line-height:11px;font-weight:400;color:#fff;">%</div>
<div class="t" style="left:1104.8px;top:362.85px;font-size:11px;line-height:11px;font-weight:400;color:#fff;">$</div>
<div class="t" style="left:1116.8px;top:362.85px;font-size:11px;line-height:11px;font-weight:400;color:#fff;">$</div>
<div class="a" style="left:31px;top:379px;width:1096px;height:19px;background:#356a8f;"></div>
<div class="a" style="left:31px;top:379px;width:1096px;height:1px;background:#2f6186;"></div>
<div class="a" style="left:31px;top:398px;width:1096px;height:1px;background:#f4f4f4;"></div>
<div class="t" style="left:259.3px;top:382.34px;font-size:11.6px;line-height:11.6px;font-weight:700;color:#fff;word-spacing:-0.6px;letter-spacing:0.068px">01 - Full General Conditions</div>
<div class="a" style="left:31px;top:399px;width:1096px;height:19px;background:#356a8f;"></div>
<div class="a" style="left:31px;top:399px;width:1096px;height:1px;background:#2f6186;"></div>
<div class="a" style="left:31px;top:418px;width:1096px;height:1px;background:#f4f4f4;"></div>
<div class="t" style="left:259.3px;top:402.34px;font-size:11.6px;line-height:11.6px;font-weight:700;color:#fff;word-spacing:-0.6px;letter-spacing:0.328px">02 - Demolition</div>
<div class="a" style="left:31px;top:419px;width:1096px;height:19px;background:#356a8f;"></div>
<div class="a" style="left:31px;top:419px;width:1096px;height:1px;background:#2f6186;"></div>
<div class="a" style="left:31px;top:438px;width:1096px;height:1px;background:#f4f4f4;"></div>
<div class="t" style="left:259.3px;top:422.68px;font-size:11.2px;line-height:11.2px;font-weight:400;color:#fff;letter-spacing:0.036px">03 - Concrete and Formwork</div>
<div class="t" style="left:777px;top:422.85px;font-size:11px;line-height:11px;font-weight:400;color:#fff;">$</div>
<div class="t" style="left:790px;top:422.85px;font-size:11px;line-height:11px;font-weight:400;color:#fff;">$</div>
<div class="t" style="right:636.4px;text-align:right;top:422.85px;font-size:11px;line-height:11px;font-weight:400;color:#fff;">10,00 %</div>
<div class="t" style="right:536.4000000000001px;text-align:right;top:422.85px;font-size:11px;line-height:11px;font-weight:400;color:#fff;">1 772,52 $</div>
<div class="t" style="left:1088.3px;top:422.85px;font-size:11px;line-height:11px;font-weight:400;color:#fff;">%</div>
<div class="t" style="left:1104.8px;top:422.85px;font-size:11px;line-height:11px;font-weight:400;color:#fff;">$</div>
<div class="t" style="left:1116.8px;top:422.85px;font-size:11px;line-height:11px;font-weight:400;color:#fff;">$</div>
<div class="a" style="left:31px;top:439px;width:1096px;height:19px;background:#356a8f;"></div>
<div class="a" style="left:31px;top:439px;width:1096px;height:1px;background:#2f6186;"></div>
<div class="a" style="left:31px;top:458px;width:1096px;height:1px;background:#f4f4f4;"></div>
<div class="t" style="left:259.3px;top:442.34px;font-size:11.6px;line-height:11.6px;font-weight:700;color:#fff;word-spacing:-0.6px;letter-spacing:0.365px">04 - Masonry</div>
<div class="t" style="left:777px;top:442.85px;font-size:11px;line-height:11px;font-weight:400;color:#fff;">$</div>
<div class="t" style="left:790px;top:442.85px;font-size:11px;line-height:11px;font-weight:400;color:#fff;">$</div>
<div class="t" style="right:636.4px;text-align:right;top:442.85px;font-size:11px;line-height:11px;font-weight:400;color:#fff;">10,00 %</div>
<div class="t" style="right:536.4000000000001px;text-align:right;top:442.85px;font-size:11px;line-height:11px;font-weight:400;color:#fff;">2 090,00 $</div>
<div class="t" style="left:1088.3px;top:442.85px;font-size:11px;line-height:11px;font-weight:400;color:#fff;">%</div>
<div class="t" style="left:1104.8px;top:442.85px;font-size:11px;line-height:11px;font-weight:400;color:#fff;">$</div>
<div class="t" style="left:1116.8px;top:442.85px;font-size:11px;line-height:11px;font-weight:400;color:#fff;">$</div>
<div class="a" style="left:31px;top:459px;width:1096px;height:19px;background:#356a8f;"></div>
<div class="a" style="left:31px;top:459px;width:1096px;height:1px;background:#2f6186;"></div>
<div class="a" style="left:31px;top:478px;width:1096px;height:1px;background:#f4f4f4;"></div>
<div class="t" style="left:259.3px;top:462.34px;font-size:11.6px;line-height:11.6px;font-weight:700;color:#fff;word-spacing:-0.6px;letter-spacing:0.446px">06-Millwork</div>
<div class="t" style="left:777px;top:462.85px;font-size:11px;line-height:11px;font-weight:400;color:#fff;">$</div>
<div class="t" style="left:790px;top:462.85px;font-size:11px;line-height:11px;font-weight:400;color:#fff;">$</div>
<div class="t" style="right:636.4px;text-align:right;top:462.85px;font-size:11px;line-height:11px;font-weight:400;color:#fff;">10,00 %</div>
<div class="t" style="right:536.4000000000001px;text-align:right;top:462.85px;font-size:11px;line-height:11px;font-weight:400;color:#fff;">98,92 $</div>
<div class="t" style="left:1088.3px;top:462.85px;font-size:11px;line-height:11px;font-weight:400;color:#fff;">%</div>
<div class="t" style="left:1104.8px;top:462.85px;font-size:11px;line-height:11px;font-weight:400;color:#fff;">$</div>
<div class="t" style="left:1116.8px;top:462.85px;font-size:11px;line-height:11px;font-weight:400;color:#fff;">$</div>
<div class="a" style="left:31px;top:479px;width:1096px;height:19px;background:#356a8f;"></div>
<div class="a" style="left:31px;top:479px;width:1096px;height:1px;background:#2f6186;"></div>
<div class="a" style="left:31px;top:498px;width:1096px;height:1px;background:#f4f4f4;"></div>
<div class="t" style="left:259.3px;top:482.34px;font-size:11.6px;line-height:11.6px;font-weight:700;color:#fff;word-spacing:-0.6px;letter-spacing:0.233px">06 - Partition &amp; ceilings</div>
<div class="t" style="left:777px;top:482.85px;font-size:11px;line-height:11px;font-weight:400;color:#fff;">$</div>
<div class="t" style="left:790px;top:482.85px;font-size:11px;line-height:11px;font-weight:400;color:#fff;">$</div>
<div class="t" style="right:636.4px;text-align:right;top:482.85px;font-size:11px;line-height:11px;font-weight:400;color:#fff;">10,00 %</div>
<div class="t" style="right:536.4000000000001px;text-align:right;top:482.85px;font-size:11px;line-height:11px;font-weight:400;color:#fff;">1 543,83 $</div>
<div class="t" style="left:1088.3px;top:482.85px;font-size:11px;line-height:11px;font-weight:400;color:#fff;">%</div>
<div class="t" style="left:1104.8px;top:482.85px;font-size:11px;line-height:11px;font-weight:400;color:#fff;">$</div>
<div class="t" style="left:1116.8px;top:482.85px;font-size:11px;line-height:11px;font-weight:400;color:#fff;">$</div>
<div class="a" style="left:31px;top:499px;width:1096px;height:19px;background:#356a8f;"></div>
<div class="a" style="left:31px;top:499px;width:1096px;height:1px;background:#2f6186;"></div>
<div class="a" style="left:31px;top:518px;width:1096px;height:1px;background:#f4f4f4;"></div>
<div class="t" style="left:259.3px;top:502.34px;font-size:11.6px;line-height:11.6px;font-weight:700;color:#fff;word-spacing:-0.6px;letter-spacing:0.297px">08 - Doors &amp; windows</div>
<div class="t" style="left:777px;top:502.85px;font-size:11px;line-height:11px;font-weight:400;color:#fff;">$</div>
<div class="t" style="left:790px;top:502.85px;font-size:11px;line-height:11px;font-weight:400;color:#fff;">$</div>
<div class="t" style="right:636.4px;text-align:right;top:502.85px;font-size:11px;line-height:11px;font-weight:400;color:#fff;">10,00 %</div>
<div class="t" style="right:536.4000000000001px;text-align:right;top:502.85px;font-size:11px;line-height:11px;font-weight:400;color:#fff;">336,36 $</div>
<div class="t" style="left:1088.3px;top:502.85px;font-size:11px;line-height:11px;font-weight:400;color:#fff;">%</div>
<div class="t" style="left:1104.8px;top:502.85px;font-size:11px;line-height:11px;font-weight:400;color:#fff;">$</div>
<div class="t" style="left:1116.8px;top:502.85px;font-size:11px;line-height:11px;font-weight:400;color:#fff;">$</div>
<div class="a" style="left:31px;top:519px;width:1096px;height:19px;background:#356a8f;"></div>
<div class="a" style="left:31px;top:519px;width:1096px;height:1px;background:#2f6186;"></div>
<div class="a" style="left:31px;top:538px;width:1096px;height:1px;background:#f4f4f4;"></div>
<div class="t" style="left:259.3px;top:522.34px;font-size:11.6px;line-height:11.6px;font-weight:700;color:#fff;word-spacing:-0.6px;letter-spacing:0.298px">09 -Interior finishing</div>
<div class="t" style="left:777px;top:522.85px;font-size:11px;line-height:11px;font-weight:400;color:#fff;">$</div>
<div class="t" style="left:790px;top:522.85px;font-size:11px;line-height:11px;font-weight:400;color:#fff;">$</div>
<div class="t" style="right:636.4px;text-align:right;top:522.85px;font-size:11px;line-height:11px;font-weight:400;color:#fff;">10,00 %</div>
<div class="t" style="right:536.4000000000001px;text-align:right;top:522.85px;font-size:11px;line-height:11px;font-weight:400;color:#fff;">1 222,44 $</div>
<div class="t" style="left:1088.3px;top:522.85px;font-size:11px;line-height:11px;font-weight:400;color:#fff;">%</div>
<div class="t" style="left:1104.8px;top:522.85px;font-size:11px;line-height:11px;font-weight:400;color:#fff;">$</div>
<div class="t" style="left:1116.8px;top:522.85px;font-size:11px;line-height:11px;font-weight:400;color:#fff;">$</div>
<div class="a" style="left:31px;top:539px;width:1096px;height:19px;background:#356a8f;"></div>
<div class="a" style="left:31px;top:539px;width:1096px;height:1px;background:#2f6186;"></div>
<div class="a" style="left:31px;top:558px;width:1096px;height:1px;background:#f4f4f4;"></div>
<div class="t" style="left:259.3px;top:542.34px;font-size:11.6px;line-height:11.6px;font-weight:700;color:#fff;word-spacing:-0.6px;letter-spacing:0.086px">09- Floor Covering</div>
<div class="t" style="left:777px;top:542.85px;font-size:11px;line-height:11px;font-weight:400;color:#fff;">$</div>
<div class="t" style="left:790px;top:542.85px;font-size:11px;line-height:11px;font-weight:400;color:#fff;">$</div>
<div class="t" style="right:636.4px;text-align:right;top:542.85px;font-size:11px;line-height:11px;font-weight:400;color:#fff;">10,00 %</div>
<div class="t" style="right:536.4000000000001px;text-align:right;top:542.85px;font-size:11px;line-height:11px;font-weight:400;color:#fff;">2 387,60 $</div>
<div class="t" style="left:1088.3px;top:542.85px;font-size:11px;line-height:11px;font-weight:400;color:#fff;">%</div>
<div class="t" style="left:1104.8px;top:542.85px;font-size:11px;line-height:11px;font-weight:400;color:#fff;">$</div>
<div class="t" style="left:1116.8px;top:542.85px;font-size:11px;line-height:11px;font-weight:400;color:#fff;">$</div>
<div class="a" style="left:31px;top:559px;width:1096px;height:19px;background:#356a8f;"></div>
<div class="a" style="left:31px;top:559px;width:1096px;height:1px;background:#2f6186;"></div>
<div class="a" style="left:31px;top:578px;width:1096px;height:1px;background:#f4f4f4;"></div>
<div class="t" style="left:259.3px;top:562.34px;font-size:11.6px;line-height:11.6px;font-weight:700;color:#fff;word-spacing:-0.6px;letter-spacing:0.139px">13 - Special Construction</div>
<div class="t" style="left:777px;top:562.85px;font-size:11px;line-height:11px;font-weight:400;color:#fff;">$</div>
<div class="t" style="left:790px;top:562.85px;font-size:11px;line-height:11px;font-weight:400;color:#fff;">$</div>
<div class="t" style="right:636.4px;text-align:right;top:562.85px;font-size:11px;line-height:11px;font-weight:400;color:#fff;">10,00 %</div>
<div class="t" style="right:536.4000000000001px;text-align:right;top:562.85px;font-size:11px;line-height:11px;font-weight:400;color:#fff;">57,97 $</div>
<div class="t" style="left:1088.3px;top:562.85px;font-size:11px;line-height:11px;font-weight:400;color:#fff;">%</div>
<div class="t" style="left:1104.8px;top:562.85px;font-size:11px;line-height:11px;font-weight:400;color:#fff;">$</div>
<div class="t" style="left:1116.8px;top:562.85px;font-size:11px;line-height:11px;font-weight:400;color:#fff;">$</div>
<div class="a" style="left:31px;top:579px;width:1096px;height:19px;background:#356a8f;"></div>
<div class="a" style="left:31px;top:579px;width:1096px;height:1px;background:#2f6186;"></div>
<div class="a" style="left:31px;top:598px;width:1096px;height:1px;background:#f4f4f4;"></div>
<div class="t" style="left:259.3px;top:582.34px;font-size:11.6px;line-height:11.6px;font-weight:700;color:#fff;word-spacing:-0.6px;letter-spacing:0.230px">15.1 - Plumbing</div>
<div class="t" style="left:777px;top:582.85px;font-size:11px;line-height:11px;font-weight:400;color:#fff;">$</div>
<div class="t" style="left:790px;top:582.85px;font-size:11px;line-height:11px;font-weight:400;color:#fff;">$</div>
<div class="t" style="right:754.2px;text-align:right;top:582.85px;font-size:11px;line-height:11px;font-weight:400;color:#fff;">5,00 %</div>
<div class="t" style="right:636.4px;text-align:right;top:582.85px;font-size:11px;line-height:11px;font-weight:400;color:#fff;">5,00 %</div>
<div class="t" style="right:536.4000000000001px;text-align:right;top:582.85px;font-size:11px;line-height:11px;font-weight:400;color:#fff;">137,50 $</div>
<div class="t" style="left:1088.3px;top:582.85px;font-size:11px;line-height:11px;font-weight:400;color:#fff;">%</div>
<div class="t" style="left:1104.8px;top:582.85px;font-size:11px;line-height:11px;font-weight:400;color:#fff;">$</div>
<div class="t" style="left:1116.8px;top:582.85px;font-size:11px;line-height:11px;font-weight:400;color:#fff;">$</div>
<div class="a" style="left:31px;top:599px;width:1096px;height:19px;background:#356a8f;"></div>
<div class="a" style="left:31px;top:599px;width:1096px;height:1px;background:#2f6186;"></div>
<div class="a" style="left:31px;top:618px;width:1096px;height:1px;background:#f4f4f4;"></div>
<div class="t" style="left:259.3px;top:602.34px;font-size:11.6px;line-height:11.6px;font-weight:700;color:#fff;word-spacing:-0.6px;letter-spacing:0.299px">15.2 - Ventilation (HVAC)</div>
<div class="t" style="left:777px;top:602.85px;font-size:11px;line-height:11px;font-weight:400;color:#fff;">$</div>
<div class="t" style="left:790px;top:602.85px;font-size:11px;line-height:11px;font-weight:400;color:#fff;">$</div>
<div class="t" style="right:636.4px;text-align:right;top:602.85px;font-size:11px;line-height:11px;font-weight:400;color:#fff;">10,00 %</div>
<div class="t" style="right:536.4000000000001px;text-align:right;top:602.85px;font-size:11px;line-height:11px;font-weight:400;color:#fff;">605,00 $</div>
<div class="t" style="left:1088.3px;top:602.85px;font-size:11px;line-height:11px;font-weight:400;color:#fff;">%</div>
<div class="t" style="left:1104.8px;top:602.85px;font-size:11px;line-height:11px;font-weight:400;color:#fff;">$</div>
<div class="t" style="left:1116.8px;top:602.85px;font-size:11px;line-height:11px;font-weight:400;color:#fff;">$</div>
<div class="a" style="left:31px;top:619px;width:1096px;height:19px;background:#356a8f;"></div>
<div class="a" style="left:31px;top:619px;width:1096px;height:1px;background:#2f6186;"></div>
<div class="a" style="left:31px;top:638px;width:1096px;height:1px;background:#f4f4f4;"></div>
<div class="t" style="left:259.3px;top:622.34px;font-size:11.6px;line-height:11.6px;font-weight:700;color:#fff;word-spacing:-0.6px;letter-spacing:0.272px">16 - Electricity</div>
<div class="t" style="left:777px;top:622.85px;font-size:11px;line-height:11px;font-weight:400;color:#fff;">$</div>
<div class="t" style="left:790px;top:622.85px;font-size:11px;line-height:11px;font-weight:400;color:#fff;">$</div>
<div class="t" style="right:636.4px;text-align:right;top:622.85px;font-size:11px;line-height:11px;font-weight:400;color:#fff;">10,00 %</div>
<div class="t" style="right:536.4000000000001px;text-align:right;top:622.85px;font-size:11px;line-height:11px;font-weight:400;color:#fff;">525,00 $</div>
<div class="t" style="left:1088.3px;top:622.85px;font-size:11px;line-height:11px;font-weight:400;color:#fff;">%</div>
<div class="t" style="left:1104.8px;top:622.85px;font-size:11px;line-height:11px;font-weight:400;color:#fff;">$</div>
<div class="t" style="left:1116.8px;top:622.85px;font-size:11px;line-height:11px;font-weight:400;color:#fff;">$</div>
<div class="a" style="left:758px;top:339px;width:1px;height:300px;background:#707070"></div>
<div class="a" style="left:31px;top:639px;width:1097px;height:1px;background:#6e6e6e;"></div>
<div class="a" style="left:31px;top:579px;width:1096px;height:2px;background:#000;"></div>
<div class="a" style="left:31px;top:596px;width:1096px;height:2px;background:#000;"></div>
<div class="a" style="left:31px;top:598px;width:1096px;height:1px;background:#356a8f;"></div>
<div class="a" style="left:915px;top:580px;width:71px;height:17px;border:1px solid #0a78e0"></div>
<svg class="a" style="left:0px;top:0px" width="1" height="1" viewBox="0 0 1 1"><defs><linearGradient id="cbg" x1="0" y1="0" x2="1" y2="1"><stop offset="0" stop-color="#cfd2d8"/><stop offset="1" stop-color="#f7f7f7"/></linearGradient><linearGradient id="tbg" x1="0" y1="0" x2="0" y2="1"><stop offset="0" stop-color="#fdfdfd"/><stop offset="1" stop-color="#d8d8d8"/></linearGradient></defs><rect x="126.5" y="342.5" width="12" height="12" fill="#fff" stroke="#a29f9a"/><rect x="128" y="344" width="9" height="9" fill="url(#cbg)"/><rect x="886.5" y="342.5" width="12" height="12" fill="#fff" stroke="#a29f9a"/><rect x="888" y="344" width="9" height="9" fill="url(#cbg)"/><rect x="33.5" y="344.5" width="8.5" height="8.5" rx="0.8" fill="url(#tbg)" stroke="#9a9a9a"/><path d="M35 348.5H40" stroke="#3a4fa8" stroke-width="1"/><rect x="126.5" y="362.5" width="12" height="12" fill="#fff" stroke="#a29f9a"/><rect x="128" y="364" width="9" height="9" fill="url(#cbg)"/><rect x="886.5" y="362.5" width="12" height="12" fill="#fff" stroke="#a29f9a"/><rect x="888" y="364" width="9" height="9" fill="url(#cbg)"/><rect x="162.5" y="362.5" width="12" height="12" fill="#fff" stroke="#a29f9a"/><rect x="164" y="364" width="9" height="9" fill="url(#cbg)"/><path d="M165.2 368.6L167.6 372.2L172 364.8" fill="none" stroke="#3a4fa8" stroke-width="1.6"/><rect x="46.5" y="364.5" width="8.5" height="8.5" rx="0.8" fill="url(#tbg)" stroke="#9a9a9a"/><path d="M48 368.5H53" stroke="#3a4fa8" stroke-width="1"/><rect x="126.5" y="382.5" width="12" height="12" fill="#fff" stroke="#a29f9a"/><rect x="128" y="384" width="9" height="9" fill="url(#cbg)"/><rect x="886.5" y="382.5" width="12" height="12" fill="#fff" stroke="#a29f9a"/><rect x="888" y="384" width="9" height="9" fill="url(#cbg)"/><rect x="59.5" y="384.5" width="8.5" height="8.5" rx="0.8" fill="url(#tbg)" stroke="#9a9a9a"/><path d="M61 388.5H66M63.5 386V391" stroke="#3a4fa8" stroke-width="1"/><rect x="126.5" y="402.5" width="12" height="12" fill="#fff" stroke="#a29f9a"/><rect x="128" y="404" width="9" height="9" fill="url(#cbg)"/><rect x="886.5" y="402.5" width="12" height="12" fill="#fff" stroke="#a29f9a"/><rect x="888" y="404" width="9" height="9" fill="url(#cbg)"/><rect x="59.5" y="404.5" width="8.5" height="8.5" rx="0.8" fill="url(#tbg)" stroke="#9a9a9a"/><path d="M61 408.5H66M63.5 406V411" stroke="#3a4fa8" stroke-width="1"/><rect x="126.5" y="422.5" width="12" height="12" fill="#fff" stroke="#a29f9a"/><rect x="128" y="424" width="9" height="9" fill="url(#cbg)"/><rect x="886.5" y="422.5" width="12" height="12" fill="#fff" stroke="#a29f9a"/><rect x="888" y="424" width="9" height="9" fill="url(#cbg)"/><rect x="59.5" y="424.5" width="8.5" height="8.5" rx="0.8" fill="url(#tbg)" stroke="#9a9a9a"/><path d="M61 428.5H66M63.5 426V431" stroke="#3a4fa8" stroke-width="1"/><rect x="126.5" y="442.5" width="12" height="12" fill="#fff" stroke="#a29f9a"/><rect x="128" y="444" width="9" height="9" fill="url(#cbg)"/><rect x="886.5" y="442.5" width="12" height="12" fill="#fff" stroke="#a29f9a"/><rect x="888" y="444" width="9" height="9" fill="url(#cbg)"/><rect x="59.5" y="444.5" width="8.5" height="8.5" rx="0.8" fill="url(#tbg)" stroke="#9a9a9a"/><path d="M61 448.5H66M63.5 446V451" stroke="#3a4fa8" stroke-width="1"/><rect x="126.5" y="462.5" width="12" height="12" fill="#fff" stroke="#a29f9a"/><rect x="128" y="464" width="9" height="9" fill="url(#cbg)"/><rect x="886.5" y="462.5" width="12" height="12" fill="#fff" stroke="#a29f9a"/><rect x="888" y="464" width="9" height="9" fill="url(#cbg)"/><rect x="59.5" y="464.5" width="8.5" height="8.5" rx="0.8" fill="url(#tbg)" stroke="#9a9a9a"/><path d="M61 468.5H66M63.5 466V471" stroke="#3a4fa8" stroke-width="1"/><rect x="126.5" y="482.5" width="12" height="12" fill="#fff" stroke="#a29f9a"/><rect x="128" y="484" width="9" height="9" fill="url(#cbg)"/><rect x="886.5" y="482.5" width="12" height="12" fill="#fff" stroke="#a29f9a"/><rect x="888" y="484" width="9" height="9" fill="url(#cbg)"/><rect x="59.5" y="484.5" width="8.5" height="8.5" rx="0.8" fill="url(#tbg)" stroke="#9a9a9a"/><path d="M61 488.5H66M63.5 486V491" stroke="#3a4fa8" stroke-width="1"/><rect x="126.5" y="502.5" width="12" height="12" fill="#fff" stroke="#a29f9a"/><rect x="128" y="504" width="9" height="9" fill="url(#cbg)"/><rect x="886.5" y="502.5" width="12" height="12" fill="#fff" stroke="#a29f9a"/><rect x="888" y="504" width="9" height="9" fill="url(#cbg)"/><rect x="59.5" y="504.5" width="8.5" height="8.5" rx="0.8" fill="url(#tbg)" stroke="#9a9a9a"/><path d="M61 508.5H66M63.5 506V511" stroke="#3a4fa8" stroke-width="1"/><rect x="126.5" y="522.5" width="12" height="12" fill="#fff" stroke="#a29f9a"/><rect x="128" y="524" width="9" height="9" fill="url(#cbg)"/><rect x="886.5" y="522.5" width="12" height="12" fill="#fff" stroke="#a29f9a"/><rect x="888" y="524" width="9" height="9" fill="url(#cbg)"/><rect x="59.5" y="524.5" width="8.5" height="8.5" rx="0.8" fill="url(#tbg)" stroke="#9a9a9a"/><path d="M61 528.5H66M63.5 526V531" stroke="#3a4fa8" stroke-width="1"/><rect x="126.5" y="542.5" width="12" height="12" fill="#fff" stroke="#a29f9a"/><rect x="128" y="544" width="9" height="9" fill="url(#cbg)"/><rect x="886.5" y="542.5" width="12" height="12" fill="#fff" stroke="#a29f9a"/><rect x="888" y="544" width="9" height="9" fill="url(#cbg)"/><rect x="59.5" y="544.5" width="8.5" height="8.5" rx="0.8" fill="url(#tbg)" stroke="#9a9a9a"/><path d="M61 548.5H66M63.5 546V551" stroke="#3a4fa8" stroke-width="1"/><rect x="126.5" y="562.5" width="12" height="12" fill="#fff" stroke="#a29f9a"/><rect x="128" y="564" width="9" height="9" fill="url(#cbg)"/><rect x="886.5" y="562.5" width="12" height="12" fill="#fff" stroke="#a29f9a"/><rect x="888" y="564" width="9" height="9" fill="url(#cbg)"/><rect x="59.5" y="564.5" width="8.5" height="8.5" rx="0.8" fill="url(#tbg)" stroke="#9a9a9a"/><path d="M61 568.5H66M63.5 566V571" stroke="#3a4fa8" stroke-width="1"/><rect x="126.5" y="582.5" width="12" height="12" fill="#fff" stroke="#a29f9a"/><rect x="128" y="584" width="9" height="9" fill="url(#cbg)"/><rect x="886.5" y="582.5" width="12" height="12" fill="#fff" stroke="#a29f9a"/><rect x="888" y="584" width="9" height="9" fill="url(#cbg)"/><path d="M889.2 588.6L891.6 592.2L896 584.8" fill="none" stroke="#3a4fa8" stroke-width="1.6"/><rect x="59.5" y="584.5" width="8.5" height="8.5" rx="0.8" fill="url(#tbg)" stroke="#9a9a9a"/><path d="M61 588.5H66M63.5 586V591" stroke="#3a4fa8" stroke-width="1"/><rect x="126.5" y="602.5" width="12" height="12" fill="#fff" stroke="#a29f9a"/><rect x="128" y="604" width="9" height="9" fill="url(#cbg)"/><rect x="886.5" y="602.5" width="12" height="12" fill="#fff" stroke="#a29f9a"/><rect x="888" y="604" width="9" height="9" fill="url(#cbg)"/><rect x="59.5" y="604.5" width="8.5" height="8.5" rx="0.8" fill="url(#tbg)" stroke="#9a9a9a"/><path d="M61 608.5H66M63.5 606V611" stroke="#3a4fa8" stroke-width="1"/><rect x="126.5" y="622.5" width="12" height="12" fill="#fff" stroke="#a29f9a"/><rect x="128" y="624" width="9" height="9" fill="url(#cbg)"/><rect x="886.5" y="622.5" width="12" height="12" fill="#fff" stroke="#a29f9a"/><rect x="888" y="624" width="9" height="9" fill="url(#cbg)"/><rect x="59.5" y="624.5" width="8.5" height="8.5" rx="0.8" fill="url(#tbg)" stroke="#9a9a9a"/><path d="M61 628.5H66M63.5 626V631" stroke="#3a4fa8" stroke-width="1"/><path d="M37.5 353V368.5H46M50.5 373V628.5" stroke="#000" stroke-width="1" fill="none"/><path d="M50.5 388.5H59" stroke="#000" stroke-width="1"/><path d="M50.5 408.5H59" stroke="#000" stroke-width="1"/><path d="M50.5 428.5H59" stroke="#000" stroke-width="1"/><path d="M50.5 448.5H59" stroke="#000" stroke-width="1"/><path d="M50.5 468.5H59" stroke="#000" stroke-width="1"/><path d="M50.5 488.5H59" stroke="#000" stroke-width="1"/><path d="M50.5 508.5H59" stroke="#000" stroke-width="1"/><path d="M50.5 528.5H59" stroke="#000" stroke-width="1"/><path d="M50.5 548.5H59" stroke="#000" stroke-width="1"/><path d="M50.5 568.5H59" stroke="#000" stroke-width="1"/><path d="M50.5 588.5H59" stroke="#000" stroke-width="1"/><path d="M50.5 608.5H59" stroke="#000" stroke-width="1"/><path d="M50.5 628.5H59" stroke="#000" stroke-width="1"/></svg>
<div class="a" style="left:268px;top:250px;width:62px;height:31px;border:2.5px solid #8b1010;box-shadow:2px 3px 4px rgba(0,0,0,.35)"></div>
<svg class="a" style="left:0px;top:0px" width="1" height="1" viewBox="0 0 1 1"><defs><filter id="sh" x="-50%" y="-50%" width="200%" height="200%"><feGaussianBlur in="SourceAlpha" stdDeviation="1.6"/><feOffset dx="2" dy="2.5"/><feComponentTransfer><feFuncA type="linear" slope="0.22"/></feComponentTransfer><feMerge><feMergeNode/><feMergeNode in="SourceGraphic"/></feMerge></filter></defs><g filter="url(#sh)" fill="#8b0000" stroke="#8b0000"><path d="M842.3 290V330" stroke-width="2" fill="none"/><path d="M839.9 329.1H847.3L843.6 339.4Z" stroke="none"/><path d="M897.5 292L894.8 335" stroke-width="2" fill="none"/><path d="M891.1 334.5H898.9L894.1 345Z" stroke="none"/><path d="M724 587.6L813 586.7" stroke-width="2" fill="none"/><path d="M812.1 583.2L822.9 586.6L812.1 590.1Z" stroke="none"/></g><g filter="url(#sh)" fill="#8b0000"><circle cx="302.4" cy="235.7" r="14.5"/><circle cx="841.6" cy="276.3" r="14.5"/><circle cx="897.5" cy="278.3" r="14.5"/><circle cx="710.5" cy="588.5" r="14.6"/></g></svg>
<div class="t" style="left:287.4px;width:30px;text-align:center;top:227.45px;font-size:17px;line-height:17px;font-weight:400;color:#fff;">1</div>
<div class="t" style="left:826.6px;width:30px;text-align:center;top:268.05px;font-size:17px;line-height:17px;font-weight:400;color:#fff;">2</div>
<div class="t" style="left:882.5px;width:30px;text-align:center;top:270.05px;font-size:17px;line-height:17px;font-weight:400;color:#fff;">3</div>
<div class="t" style="left:695.5px;width:30px;text-align:center;top:580.25px;font-size:17px;line-height:17px;font-weight:700;color:#fff;">4</div>
</body></html>
